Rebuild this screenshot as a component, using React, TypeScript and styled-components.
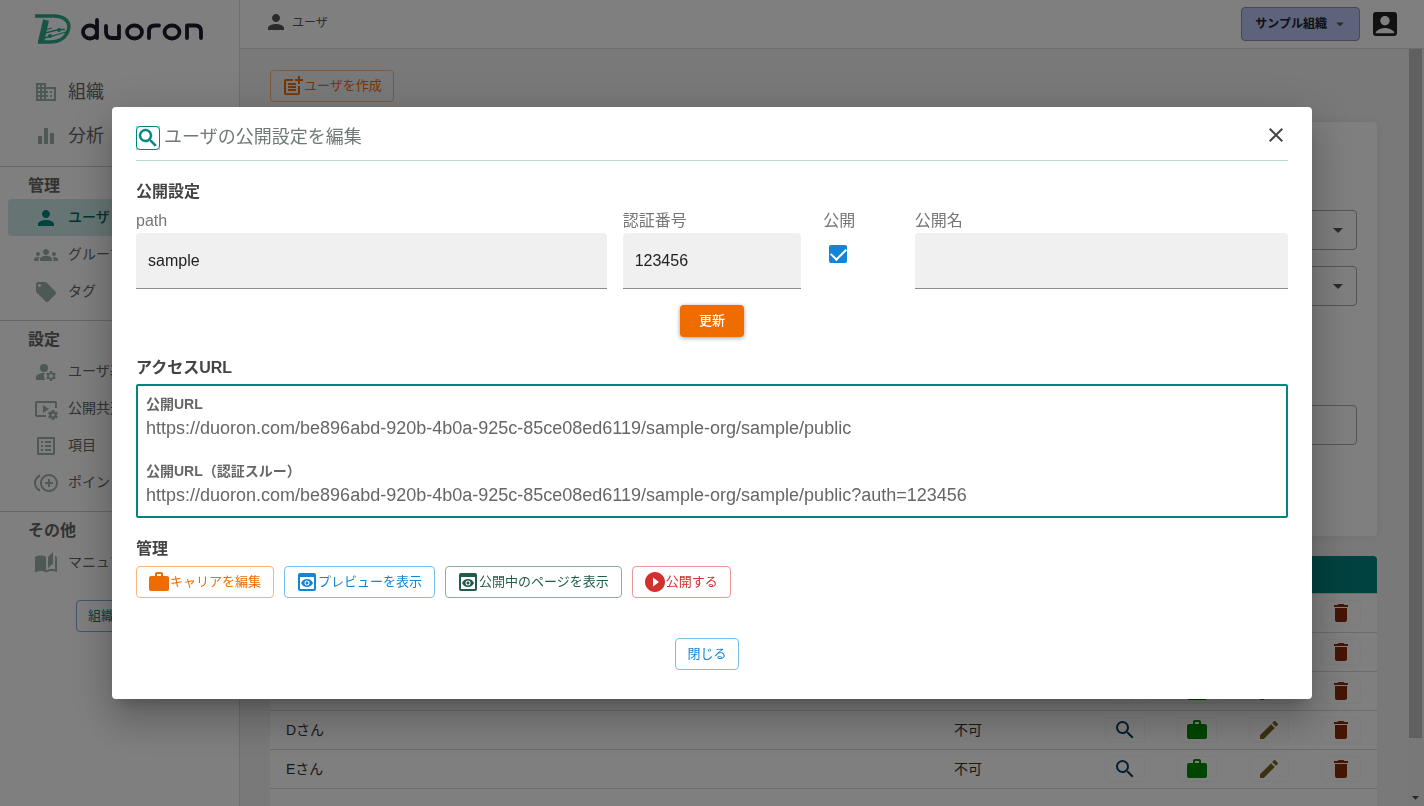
import React from "react";
import styled, { createGlobalStyle, css } from "styled-components";
import {
  MdDomain, MdEqualizer, MdPerson, MdGroups, MdLocalOffer, MdManageAccounts, MdVideoSettings,
  MdListAlt, MdControlPointDuplicate, MdAutoStories, MdPostAdd, MdArrowDropDown, MdAccountBox,
  MdSearch, MdWork, MdEdit, MdDelete, MdPreview, MdPlayCircleFilled, MdClose,
} from "react-icons/md";

const Global = createGlobalStyle`
  * { box-sizing: border-box; }
  body {
    margin: 0;
    font-family: "Liberation Sans", "Noto Sans CJK JP", sans-serif;
    font-size: 14px;
    color: #444;
    overflow: hidden;
  }
  button, input, select { font-family: inherit; }
  h1, h2, h3, p, dl, dd { margin: 0; }
`;

const Label = styled.span`
  padding-bottom: 4px;
`;

/* ---------- page ---------- */
const Page = styled.div`
  display: flex;
  height: 100vh;
  background: #fff;
`;
const Sidebar = styled.aside`
  flex: 0 0 240px;
  border-right: 1px solid #dcdcdc;
  overflow: hidden;
`;
const Brand = styled.a`
  display: flex;
  height: 70px;
  padding: 10px 0 0 32px;
`;
const NavGroup = styled.nav`
  padding: 7px 8px 10px;
  border-top: 1px solid #ccc;
  &:first-of-type { border-top: 0; padding: 0 8px 8px; }
`;
const NavHeading = styled.h2`
  padding: 0 0 1px 20px;
  font-size: 16px;
  line-height: 24px;
  color: #666;
`;
const NavLink = styled.a<{ $active?: boolean; $large?: boolean }>`
  display: flex;
  align-items: center;
  gap: 10px;
  height: ${p => (p.$large ? 44 : 37)}px;
  padding-left: 26px;
  border-radius: 4px;
  font-size: ${p => (p.$large ? 18 : 14)}px;
  color: #666;
  text-decoration: none;
  white-space: nowrap;
  svg { flex: none; width: 24px; height: 24px; color: #9cb0aa; }
  ${p => p.$active && css`
    background: #cdebe8;
    color: #00695f;
    font-weight: 500;
    svg { color: #00857f; }
  `}
`;
const Main = styled.div`
  flex: 1;
  min-width: 0;
  display: flex;
  flex-direction: column;
`;
const TopBar = styled.header`
  display: flex;
  align-items: center;
  flex: 0 0 49px;
  padding: 0 23px 0 24px;
  border-bottom: 1px solid #dcdcdc;
`;
const Crumb = styled.div`
  display: flex;
  align-items: center;
  gap: 4px;
  flex: 1;
  font-size: 12px;
  color: #555;
  padding-bottom: 4px;
  svg { width: 24px; height: 24px; color: #555; }
  ${Label} { padding-bottom: 1px; }
`;
const OrgButton = styled.button`
  display: flex;
  align-items: center;
  gap: 4px;
  height: 34px;
  padding: 0 10px 0 13px;
  border: 1px solid #8a93b0;
  border-radius: 4px;
  background: #b8c6f6;
  font-size: 12px;
  font-weight: 600;
  color: #222;
  svg { width: 18px; height: 18px; color: #555; }
`;
const AccountButton = styled.button`
  display: flex;
  margin-left: 9px;
  padding: 0;
  border: 0;
  background: none;
  svg { width: 32px; height: 32px; color: #222; }
`;
const Scroller = styled.div`
  flex: 1;
  min-height: 0;
  display: flex;
  background: #f3f3f3;
`;
const Content = styled.main`
  flex: 1;
  min-width: 0;
  padding: 21px 30px 0;
  overflow: hidden;
`;
const ScrollTrack = styled.div`
  flex: 0 0 17px;
  display: flex;
  flex-direction: column;
  align-items: center;
  justify-content: space-between;
  background: #f1f1f1;
  svg { width: 17px; height: 17px; color: #505050; }
`;
const ScrollThumb = styled.div`
  width: 13px;
  height: 91%;
  background: #c1c1c1;
`;
const SearchCard = styled.form`
  display: flex;
  flex-direction: column;
  gap: 16px;
  height: 414px;
  margin: 20px 0;
  padding: 88px 20px 0;
  border-radius: 4px;
  background: #fff;
  box-shadow: 0 0 12px rgba(0, 0, 0, 0.08);
`;
const SelectBox = styled.div`
  display: flex;
  align-items: center;
  flex: 0 0 40px;
  padding-right: 6px;
  border: 1px solid #aaa;
  border-radius: 4px;
  select {
    flex: 1;
    height: 38px;
    border: 0;
    background: none;
    appearance: none;
  }
  svg { width: 24px; height: 24px; color: #555; }
`;
const KeywordBox = styled.input`
  height: 40px;
  margin-top: 83px;
  border: 1px solid #aaa;
  border-radius: 4px;
`;
const UserTable = styled.table`
  width: 100%;
  table-layout: fixed;
  border-collapse: separate;
  border-spacing: 0;
  border-radius: 4px;
  overflow: hidden;
  background: #fff;
  color: #333;
  th { height: 38px; background: #00857f; padding: 0; border-bottom: 1px solid #d8d8d8; background-clip: padding-box; }
  td { height: 39px; padding: 0 16px 2px; border-bottom: 1px solid #d8d8d8; }
  td.action { padding: 0; text-align: center; }
`;
const rowIconColor = { view: "#0f3d5c", career: "#008a00", edit: "#7a6420", remove: "#8a2a08" };
const RowButton = styled.button<{ $kind: keyof typeof rowIconColor }>`
  display: inline-flex;
  align-items: center;
  justify-content: center;
  width: 40px;
  height: 26px;
  padding: 0;
  border: 1px solid #f6f6f6;
  border-radius: 4px;
  background: none;
  vertical-align: middle;
  color: ${p => rowIconColor[p.$kind]};
  svg { width: 24px; height: 24px; }
`;

/* ---------- buttons ---------- */
const tones = {
  orange: ["#ef6c00", "#f7b580"],
  blue: ["#1285d8", "#7bc0e8"],
  green: ["#205c48", "#8fada3"],
  red: ["#d32f2f", "#e99797"],
  teal: ["#00857f", "#80a8e0"],
};
const OutlineButton = styled.button<{ $tone: keyof typeof tones }>`
  display: inline-flex;
  align-items: center;
  justify-content: center;
  height: 32px;
  min-width: 64px;
  padding: 0 11px;
  border: 1px solid ${p => tones[p.$tone][1]};
  border-radius: 4px;
  background: none;
  color: ${p => tones[p.$tone][0]};
  font-size: 13px;
  white-space: nowrap;
  svg { flex: none; width: 24px; height: 24px; margin: 0 -1px; }
`;
const SidebarAction = styled.div`
  padding: 19px 0 0 68px;
`;

/* ---------- dialog ---------- */
const Backdrop = styled.div`
  position: fixed;
  inset: 0;
  display: flex;
  align-items: center;
  justify-content: center;
  padding: 32px;
  background: rgba(0, 0, 0, 0.5);
`;
const Dialog = styled.section`
  width: 100%;
  max-width: 1200px;
  padding: 16px 24px 29px;
  border-radius: 4px;
  background: #fff;
  box-shadow: 0 11px 15px -7px rgba(0, 0, 0, 0.2), 0 24px 38px 3px rgba(0, 0, 0, 0.14),
    0 9px 46px 8px rgba(0, 0, 0, 0.12);
`;
const DialogHeader = styled.header`
  display: flex;
  align-items: center;
  gap: 4px;
  height: 38px;
  padding-bottom: 10px;
  border-bottom: 1px solid #bfd5d0;
`;
const TitleIcon = styled.span`
  display: flex;
  flex: none;
  align-items: center;
  justify-content: center;
  width: 24px;
  height: 24px;
  margin-top: 2px;
  border: 1px solid #00857f;
  border-radius: 4px;
  color: #00857f;
  svg { flex: none; width: 24px; height: 24px; stroke: currentColor; stroke-width: 0.5; }
`;
const DialogTitle = styled.h1`
  flex: 1;
  font-size: 18px;
  font-weight: 400;
  line-height: 28px;
  color: #6f7a76;
`;
const CloseButton = styled.button`
  display: flex;
  margin-bottom: 4px;
  padding: 0;
  border: 0;
  background: none;
  color: #444;
  svg { width: 24px; height: 24px; }
`;
const Section = styled.section`
  padding-top: 18px;
`;
const SectionHeading = styled.h2`
  font-size: 16px;
  line-height: 26px;
  color: #444;
`;
const FieldGrid = styled.div`
  display: grid;
  grid-template-columns: repeat(12, 1fr);
  gap: 16px;
  padding-top: 3px;
`;
const Field = styled.div<{ $span: number }>`
  grid-column: span ${p => p.$span};
  display: flex;
  flex-direction: column;
  label { font-size: 16px; line-height: 25px; color: #757575; white-space: nowrap; }
`;
const TextInput = styled.input`
  width: 100%;
  height: 56px;
  padding: 0 12px;
  border: 0;
  border-bottom: 1px solid #8c8c8c;
  border-radius: 4px 4px 0 0;
  background: #f0f0f0;
  font-size: 16px;
  color: #222;
`;
const CheckField = styled(Field)`
  padding-left: 6px;
`;
const CheckBox = styled.input`
  appearance: none;
  width: 18px;
  height: 18px;
  margin: 12px 6px;
  border-radius: 2px;
  background: #1285d8;
  display: grid;
  place-items: center;
  &:checked::before {
    content: "";
    width: 13px;
    height: 7px;
    margin-bottom: 4px;
    border: solid #fff;
    border-width: 0 0 2px 2px;
    rotate: -45deg;
  }
`;
const Centered = styled.div`
  display: flex;
  justify-content: center;
  padding-top: 16px;
`;
const SubmitButton = styled.button`
  display: flex;
  align-items: center;
  justify-content: center;
  width: 64px;
  height: 32px;
  border: 0;
  border-radius: 4px;
  background: #ef6c00;
  color: #fff;
  font-size: 13px;
  font-weight: 500;
  box-shadow: 0 1px 4px rgba(0, 0, 0, 0.4);
`;
const UrlBox = styled.dl`
  display: flex;
  flex-direction: column;
  margin-top: 3px;
  padding: 6px 8px;
  border: 2px solid #00857f;
  border-radius: 2px;
  color: #666;
  dt { font-size: 14px; font-weight: 700; line-height: 24px; }
  dd { font-size: 18px; line-height: 24px; overflow-wrap: anywhere; }
  dd + dt { margin-top: 19px; }
  dd:last-child { padding-bottom: 3px; }
`;
const ButtonRow = styled.div`
  display: flex;
  flex-wrap: wrap;
  gap: 10px;
  padding-top: 4px;
  ${OutlineButton} { padding: 0 12px 0 11px; }
`;
const Footer = styled.footer`
  display: flex;
  justify-content: center;
  padding: 40px 10px 0 0;
`;

const Logo = () => (
  <svg width="174" height="38" viewBox="0 0 174 38" role="img" aria-label="duoron">
    <g fill="none" stroke="#2fa888" strokeWidth="3.500">
      <path d="M3 6H21C34 6 39 13 36 21C33 29 26 32 18 32H6" />
      <path d="M14 10L9 32" strokeWidth="6" />
      <path d="M13 23L27 19.500H33M12 28L20 26L34 22M13 20L20 18" strokeWidth="1.300" />
    </g>
    <circle cx="27" cy="20" r="2" fill="#2fa888" />
    <circle cx="18" cy="26" r="2" fill="#2fa888" />
    <g fill="none" stroke="#1c1a2b" strokeWidth="3.800" strokeLinecap="round" strokeLinejoin="round">
      <path d="M65 10V28M65 22A7 6.500 0 1 0 51 22A7 6.500 0 1 0 65 22" />
      <path d="M74 16V22Q74 28 80 28H87V16" />
      <ellipse cx="102.500" cy="22" rx="7.500" ry="6.500" />
      <path d="M117 28V21Q117 15.500 123 15.500H127" />
      <ellipse cx="140" cy="22" rx="7.500" ry="6.500" />
      <path d="M155 28V15.500H163Q169 15.500 169 21.500V28" />
    </g>
  </svg>
);

const people = ["Aさん", "Bさん", "Cさん", "Dさん", "Eさん"];

export default function App() {
  return (
    <>
      <Global />
      <Page>
        <Sidebar>
          <Brand href="#"><Logo /></Brand>
          <NavGroup>
            <NavLink href="#" $large><MdDomain /><Label>組織</Label></NavLink>
            <NavLink href="#" $large><MdEqualizer /><Label>分析</Label></NavLink>
          </NavGroup>
          <NavGroup>
            <NavHeading>管理</NavHeading>
            <NavLink href="#" $active><MdPerson /><Label>ユーザ</Label></NavLink>
            <NavLink href="#"><MdGroups /><Label>グループ</Label></NavLink>
            <NavLink href="#"><MdLocalOffer /><Label>タグ</Label></NavLink>
          </NavGroup>
          <NavGroup>
            <NavHeading>設定</NavHeading>
            <NavLink href="#"><MdManageAccounts /><Label>ユーザ基本</Label></NavLink>
            <NavLink href="#"><MdVideoSettings /><Label>公開共通</Label></NavLink>
            <NavLink href="#"><MdListAlt /><Label>項目</Label></NavLink>
            <NavLink href="#"><MdControlPointDuplicate /><Label>ポイント</Label></NavLink>
          </NavGroup>
          <NavGroup>
            <NavHeading>その他</NavHeading>
            <NavLink href="#"><MdAutoStories /><Label>マニュアル</Label></NavLink>
            <SidebarAction>
              <OutlineButton $tone="teal"><Label>組織を選択</Label></OutlineButton>
            </SidebarAction>
          </NavGroup>
        </Sidebar>
        <Main>
          <TopBar>
            <Crumb><MdPerson /><Label>ユーザ</Label></Crumb>
            <OrgButton><Label>サンプル組織</Label><MdArrowDropDown /></OrgButton>
            <AccountButton aria-label="アカウント"><MdAccountBox /></AccountButton>
          </TopBar>
          <Scroller>
            <Content>
              <OutlineButton $tone="orange"><MdPostAdd /><Label>ユーザを作成</Label></OutlineButton>
              <SearchCard>
                <SelectBox><select aria-label="グループ" /><MdArrowDropDown /></SelectBox>
                <SelectBox><select aria-label="タグ" /><MdArrowDropDown /></SelectBox>
                <KeywordBox aria-label="キーワード" />
              </SearchCard>
              <UserTable>
                <colgroup>
                  <col />
                  <col width="151" />
                  <col width="72" /><col width="72" /><col width="72" /><col width="72" />
                </colgroup>
                <thead>
                  <tr><th /><th /><th /><th /><th /><th /></tr>
                </thead>
                <tbody>
                  {people.map(name => (
                    <tr key={name}>
                      <td>{name}</td>
                      <td>不可</td>
                      <td className="action"><RowButton $kind="view" aria-label="公開設定"><MdSearch /></RowButton></td>
                      <td className="action"><RowButton $kind="career" aria-label="キャリア"><MdWork /></RowButton></td>
                      <td className="action"><RowButton $kind="edit" aria-label="編集"><MdEdit /></RowButton></td>
                      <td className="action"><RowButton $kind="remove" aria-label="削除"><MdDelete /></RowButton></td>
                    </tr>
                  ))}
                  <tr><td colSpan={6} /></tr>
                </tbody>
              </UserTable>
            </Content>
            <ScrollTrack><ScrollThumb /><MdArrowDropDown /></ScrollTrack>
          </Scroller>
        </Main>
      </Page>

      <Backdrop>
        <Dialog role="dialog" aria-modal="true" aria-labelledby="dialog-title">
          <DialogHeader>
            <TitleIcon><MdSearch /></TitleIcon>
            <DialogTitle id="dialog-title">ユーザの公開設定を編集</DialogTitle>
            <CloseButton aria-label="閉じる"><MdClose /></CloseButton>
          </DialogHeader>
          <Section>
            <SectionHeading>公開設定</SectionHeading>
            <FieldGrid>
              <Field $span={5}>
                <label htmlFor="path">path</label>
                <TextInput id="path" defaultValue="sample" />
              </Field>
              <Field $span={2}>
                <label htmlFor="auth">認証番号</label>
                <TextInput id="auth" defaultValue="123456" />
              </Field>
              <CheckField $span={1}>
                <label htmlFor="open">公開</label>
                <CheckBox id="open" type="checkbox" defaultChecked />
              </CheckField>
              <Field $span={4}>
                <label htmlFor="name">公開名</label>
                <TextInput id="name" />
              </Field>
            </FieldGrid>
            <Centered><SubmitButton><Label>更新</Label></SubmitButton></Centered>
          </Section>
          <Section>
            <SectionHeading>アクセスURL</SectionHeading>
            <UrlBox>
              <dt>公開URL</dt>
              <dd>https://duoron.com/be896abd-920b-4b0a-925c-85ce08ed6119/sample-org/sample/public</dd>
              <dt>公開URL（認証スルー）</dt>
              <dd>https://duoron.com/be896abd-920b-4b0a-925c-85ce08ed6119/sample-org/sample/public?auth=123456</dd>
            </UrlBox>
          </Section>
          <Section>
            <SectionHeading>管理</SectionHeading>
            <ButtonRow>
              <OutlineButton $tone="orange"><MdWork /><Label>キャリアを編集</Label></OutlineButton>
              <OutlineButton $tone="blue"><MdPreview /><Label>プレビューを表示</Label></OutlineButton>
              <OutlineButton $tone="green"><MdPreview /><Label>公開中のページを表示</Label></OutlineButton>
              <OutlineButton $tone="red"><MdPlayCircleFilled /><Label>公開する</Label></OutlineButton>
            </ButtonRow>
          </Section>
          <Footer><OutlineButton $tone="blue"><Label>閉じる</Label></OutlineButton></Footer>
        </Dialog>
      </Backdrop>
    </>
  );
}
